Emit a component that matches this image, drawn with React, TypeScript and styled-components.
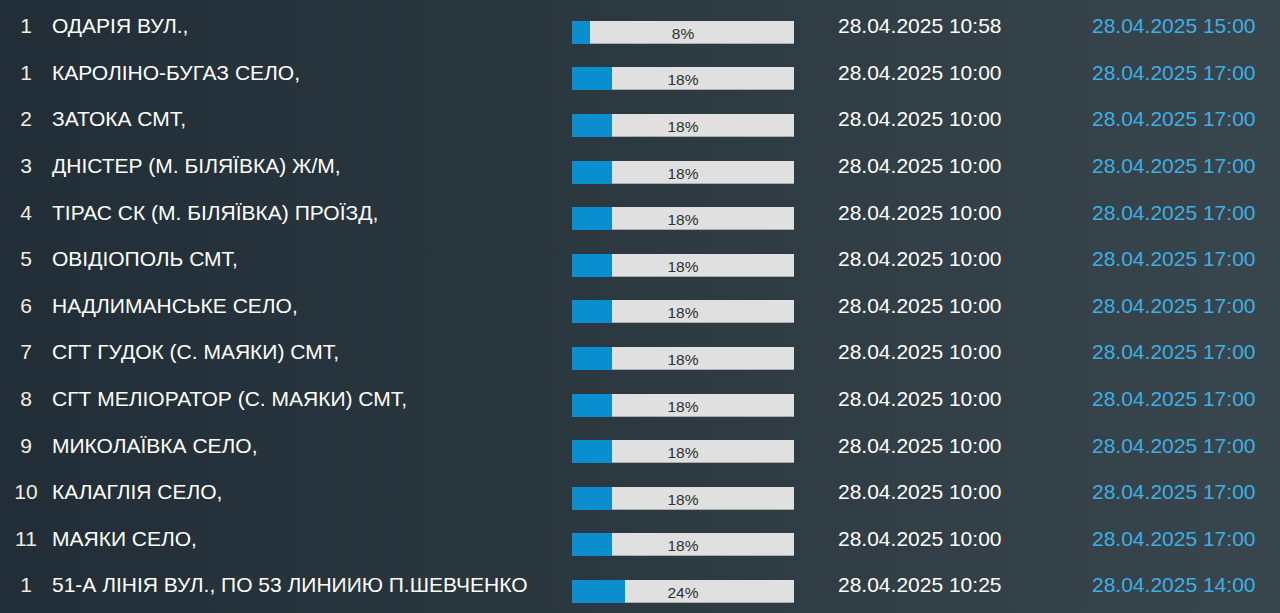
import * as React from 'react'
import styled, { createGlobalStyle } from 'styled-components'

const GlobalStyle = createGlobalStyle`
  html, body {
    margin: 0;
    padding: 0;
    height: 100%;
    background: #28353d;
  }
  body {
    font-family: 'Liberation Sans', Arial, sans-serif;
    overflow: hidden;
  }
`

const rows = [
  { n: '1', name: 'ОДАРІЯ ВУЛ.,', pct: 8, from: '28.04.2025 10:58', to: '28.04.2025 15:00' },
  { n: '1', name: 'КАРОЛІНО-БУГАЗ СЕЛО,', pct: 18, from: '28.04.2025 10:00', to: '28.04.2025 17:00' },
  { n: '2', name: 'ЗАТОКА СМТ,', pct: 18, from: '28.04.2025 10:00', to: '28.04.2025 17:00' },
  { n: '3', name: 'ДНІСТЕР (М. БІЛЯЇВКА) Ж/М,', pct: 18, from: '28.04.2025 10:00', to: '28.04.2025 17:00' },
  { n: '4', name: 'ТІРАС СК (М. БІЛЯЇВКА) ПРОЇЗД,', pct: 18, from: '28.04.2025 10:00', to: '28.04.2025 17:00' },
  { n: '5', name: 'ОВІДІОПОЛЬ СМТ,', pct: 18, from: '28.04.2025 10:00', to: '28.04.2025 17:00' },
  { n: '6', name: 'НАДЛИМАНСЬКЕ СЕЛО,', pct: 18, from: '28.04.2025 10:00', to: '28.04.2025 17:00' },
  { n: '7', name: 'СГТ ГУДОК (С. МАЯКИ) СМТ,', pct: 18, from: '28.04.2025 10:00', to: '28.04.2025 17:00' },
  { n: '8', name: 'СГТ МЕЛІОРАТОР (С. МАЯКИ) СМТ,', pct: 18, from: '28.04.2025 10:00', to: '28.04.2025 17:00' },
  { n: '9', name: 'МИКОЛАЇВКА СЕЛО,', pct: 18, from: '28.04.2025 10:00', to: '28.04.2025 17:00' },
  { n: '10', name: 'КАЛАГЛІЯ СЕЛО,', pct: 18, from: '28.04.2025 10:00', to: '28.04.2025 17:00' },
  { n: '11', name: 'МАЯКИ СЕЛО,', pct: 18, from: '28.04.2025 10:00', to: '28.04.2025 17:00' },
  { n: '1', name: '51-А ЛІНІЯ ВУЛ., ПО 53 ЛИНИИЮ П.ШЕВЧЕНКО', pct: 24, from: '28.04.2025 10:25', to: '28.04.2025 14:00' },
]

const Board = styled.div`
  width: 1280px;
  height: 613px;
  padding-top: 3px;
  box-sizing: border-box;
  background: linear-gradient(90deg, #212e37 0%, #2b3840 45%, #3a464d 100%);
`

const Row = styled.div`
  display: grid;
  grid-template-columns: 52px 520px 266px 254px 1fr;
  align-items: center;
  height: 46.6px;
  font-size: 21px;
  color: #ffffff;
`

const Num = styled.div`
  text-align: center;
  color: #f4eedb;
`

const Name = styled.div`
  white-space: nowrap;
`

const Bar = styled.div`
  position: relative;
  width: 222px;
  height: 23px;
  margin-top: 12px;
  background: #e0e0e0;
  border-bottom: 1px solid #a9acae;
  box-sizing: border-box;
`

const Fill = styled.div`
  position: absolute;
  left: 0;
  top: 0;
  bottom: -1px;
  background: #0b8ed0;
`

const BarLabel = styled.span`
  position: relative;
  display: block;
  text-align: center;
  line-height: 25px;
  font-size: 15.5px;
  color: #2f2f2f;
`

const From = styled.div`
  white-space: nowrap;
`

const To = styled.div`
  white-space: nowrap;
  color: #3db0e2;
`

export default function App() {
  return (
    <>
      <GlobalStyle />
      <Board>
        {rows.map((r, i) => (
          <Row key={i}>
            <Num>{r.n}</Num>
            <Name>{r.name}</Name>
            <Bar>
              <Fill style={{ width: `${r.pct}%` }} />
              <BarLabel>{r.pct}%</BarLabel>
            </Bar>
            <From>{r.from}</From>
            <To>{r.to}</To>
          </Row>
        ))}
      </Board>
    </>
  )
}
